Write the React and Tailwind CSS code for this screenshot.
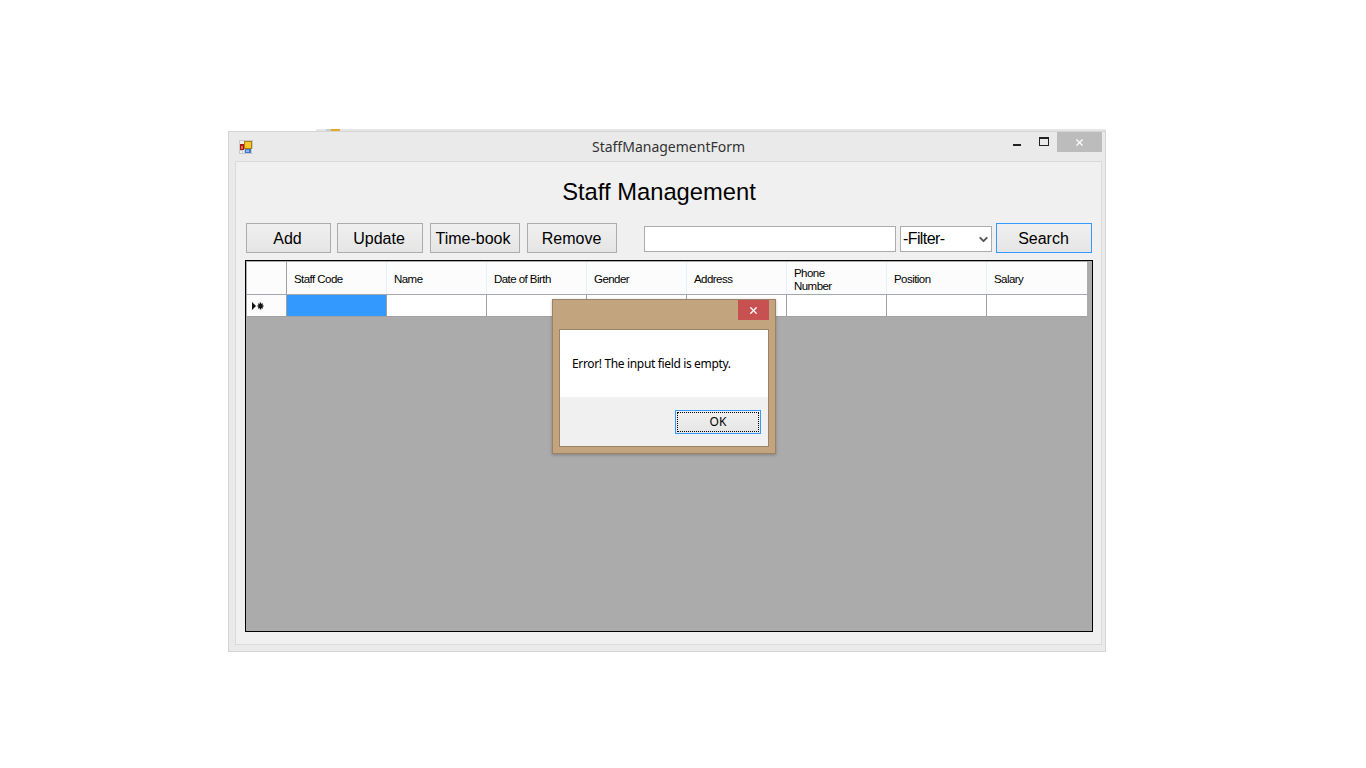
import React from "react";
import { X, ChevronDown } from "lucide-react";

const columns = ["Staff Code", "Name", "Date of Birth", "Gender", "Address", "Phone Number", "Position", "Salary"];

const AppIcon = () => (
  <svg width="14" height="14" viewBox="0 0 14 14" className="block">
    <rect x="0" y="0" width="14" height="14" fill="#c9c9c9" />
    <rect x="1" y="1" width="4" height="3" fill="#efefef" />
    <rect x="5" y="1" width="8" height="8" fill="#a87f10" />
    <rect x="6" y="2" width="6" height="6" fill="#f7c52c" />
    <rect x="1" y="4" width="4" height="6" fill="#a81a12" />
    <rect x="2" y="6" width="2" height="3" fill="#e56a50" />
    <rect x="1" y="11" width="2" height="2" fill="#f2f2f2" />
    <rect x="4" y="10" width="1" height="3" fill="#f2f2f2" />
    <rect x="6" y="9" width="6" height="4" fill="#3f78cc" />
    <rect x="7" y="10" width="3" height="2" fill="#8db8ee" />
    <rect x="13" y="9" width="1" height="4" fill="#f2f2f2" />
  </svg>
);

const ToolButton = ({ label, width, focused, shift }) => (
  <button
    type="button"
    className={`h-[30px] shrink-0 border bg-gradient-to-b from-[#f0f0f0] to-[#e5e5e5] pt-[2px] text-[16px] leading-none text-black ${width} ${shift} ${
      focused ? "border-[#3399ff]" : "border-[#acacac]"
    }`}
  >
    {label}
  </button>
);

const StaffGrid = () => (
  <div className="ml-[9px] mt-[7px] h-[372px] w-[848px] border border-[#000000] bg-[#ababab] p-px">
    {/* Header row */}
    <div className="flex h-[33px] w-[840px] border-b border-[#a5a8b0] bg-[#fcfcfc]">
      <div className="w-[40px] border-r border-[#a0a0a0]" />
      {columns.map((name) => (
        <div
          key={name}
          className="flex w-[100px] items-center border-r border-[#e8eef8] pl-[7px] pr-[30px] pt-[3px] text-[11.5px] leading-[13px] tracking-[-0.55px] text-black last:border-r-0"
        >
          {name}
        </div>
      ))}
    </div>
    {/* New row */}
    <div className="flex h-[22px] w-[840px] border-b border-[#a0a0a0] bg-white">
      <div className="flex w-[40px] items-center gap-px border-r border-[#a0a0a0] bg-[#fcfcfc] pl-[5px]">
        <svg width="12" height="8" viewBox="0 0 12 8" className="block">
          <path d="M0 0 L4 4 L0 8 Z" fill="#111111" />
          <path d="M8.5 0.5 V7.5 M5.5 4 H11.5 M6.3 1.6 L10.7 6.4 M10.7 1.6 L6.3 6.4" stroke="#111111" strokeWidth="1.4" />
        </svg>
      </div>
      <div className="w-[100px] border-r border-[#a0a0a0] bg-[#3399ff]" />
      {columns.slice(1).map((name) => (
        <div key={name} className="w-[100px] border-r border-[#a0a0a0] last:border-r-0" />
      ))}
    </div>
  </div>
);

const ErrorDialog = () => (
  <div className="absolute left-[323px] top-[167px] h-[155px] w-[224px] border border-[#9c8265] bg-[#c2a47e] shadow-[0_1px_3px_rgba(0,0,0,0.25)]">
    <div className="flex h-[29px] justify-end pr-[6px]">
      <div className="flex h-[20px] w-[31px] items-center justify-center bg-[#c75050]">
        <X size={11} strokeWidth={3} className="text-white" />
      </div>
    </div>
    <div className="mx-[6px] flex h-[118px] flex-col border border-[#9c8265] bg-white">
      <div className="flex h-[67px] items-center pl-[12px] text-[12px] tracking-[-0.35px] text-black [font-family:'Noto_Sans','Open_Sans',sans-serif]">
        Error! The input field is empty.
      </div>
      <div className="flex flex-1 items-start justify-end bg-[#f0f0f0] pr-[7px] pt-[13px]">
        <button
          type="button"
          className="flex h-[24px] w-[86px] items-center justify-center border border-[#3399ff] bg-gradient-to-b from-[#f0f0f0] to-[#e5e5e5] p-px"
        >
          <span className="flex h-full w-full items-center justify-center border border-dotted border-black text-[12px] text-black [font-family:'Noto_Sans','Open_Sans',sans-serif]">
            OK
          </span>
        </button>
      </div>
    </div>
  </div>
);

const App = () => {
  return (
    <div className="min-h-screen bg-white pl-[228px] pt-[131px] [font-family:'Liberation_Sans',Arial,sans-serif]">
      <div className="relative h-[521px] w-[878px] border border-[#d4d4d4] bg-[#eaeaea]">
        {/* Window peeking out from behind */}
        <div className="absolute -top-[3px] left-[87px] flex h-[2px] w-[790px] bg-[#e6e6e6]">
          <div className="ml-[10px] h-[2px] w-[5px] bg-[#cccccc]" />
          <div className="h-[2px] w-[9px] bg-[#e0a92a]" />
        </div>

        {/* Title bar */}
        <div className="grid h-[29px] grid-cols-[1fr_auto_1fr] items-center">
          <div className="pl-[10px]">
            <AppIcon />
          </div>
          <div className="pl-[3px] text-[14px] text-[#333333] [font-family:'Noto_Sans','Open_Sans',sans-serif]">StaffManagementForm</div>
          <div className="flex h-full items-start justify-end">
            <div className="mr-[2px] flex h-[20px] w-[28px] items-center justify-center">
              <div className="mt-[5px] h-[2px] w-[8px] bg-[#222222]" />
            </div>
            <div className="mr-[2px] flex h-[20px] w-[22px] items-center justify-center pb-[2px]">
              <div className="h-[9px] w-[10px] border border-t-2 border-[#222222]" />
            </div>
            <div className="mr-[3px] flex h-[20px] w-[45px] items-center justify-center bg-[#bcbcbc]">
              <X size={11} strokeWidth={2.5} className="text-white" />
            </div>
          </div>
        </div>

        {/* Client area */}
        <div className="ml-[6px] h-[484px] w-[867px] border border-[#dadada] bg-[#f0f0f0]">
          <h1 className="pr-[19px] pt-[15px] text-center text-[23.75px] leading-[30px] text-black">Staff Management</h1>

          <div className="ml-[10px] mt-[16px] flex h-[30px] items-center">
            <ToolButton label="Add" width="w-[85px]" shift="pr-[2px]" />
            <div className="w-[6px]" />
            <ToolButton label="Update" width="w-[86px]" shift="pr-[2px]" />
            <div className="w-[7px]" />
            <ToolButton label="Time-book" width="w-[90px]" shift="pr-[4px]" />
            <div className="w-[7px]" />
            <ToolButton label="Remove" width="w-[90px]" shift="pr-[1px]" />
            <div className="w-[27px]" />
            <div className="mt-[1px] h-[26px] w-[252px] border border-[#acacac] bg-white" />
            <div className="w-[4px]" />
            <div className="mt-[1px] flex h-[26px] w-[92px] items-center justify-between border border-[#acacac] bg-white pl-[2px] pr-[1px] text-[16px] tracking-[-0.6px] text-black">
              -Filter-
              <ChevronDown size={13} strokeWidth={3.5} className="mt-[1px] text-[#555555]" />
            </div>
            <div className="w-[4px]" />
            <ToolButton label="Search" width="w-[96px]" focused shift="pr-[1px]" />
          </div>

          <StaffGrid />
        </div>

        <ErrorDialog />
      </div>
    </div>
  );
};

export default App;
